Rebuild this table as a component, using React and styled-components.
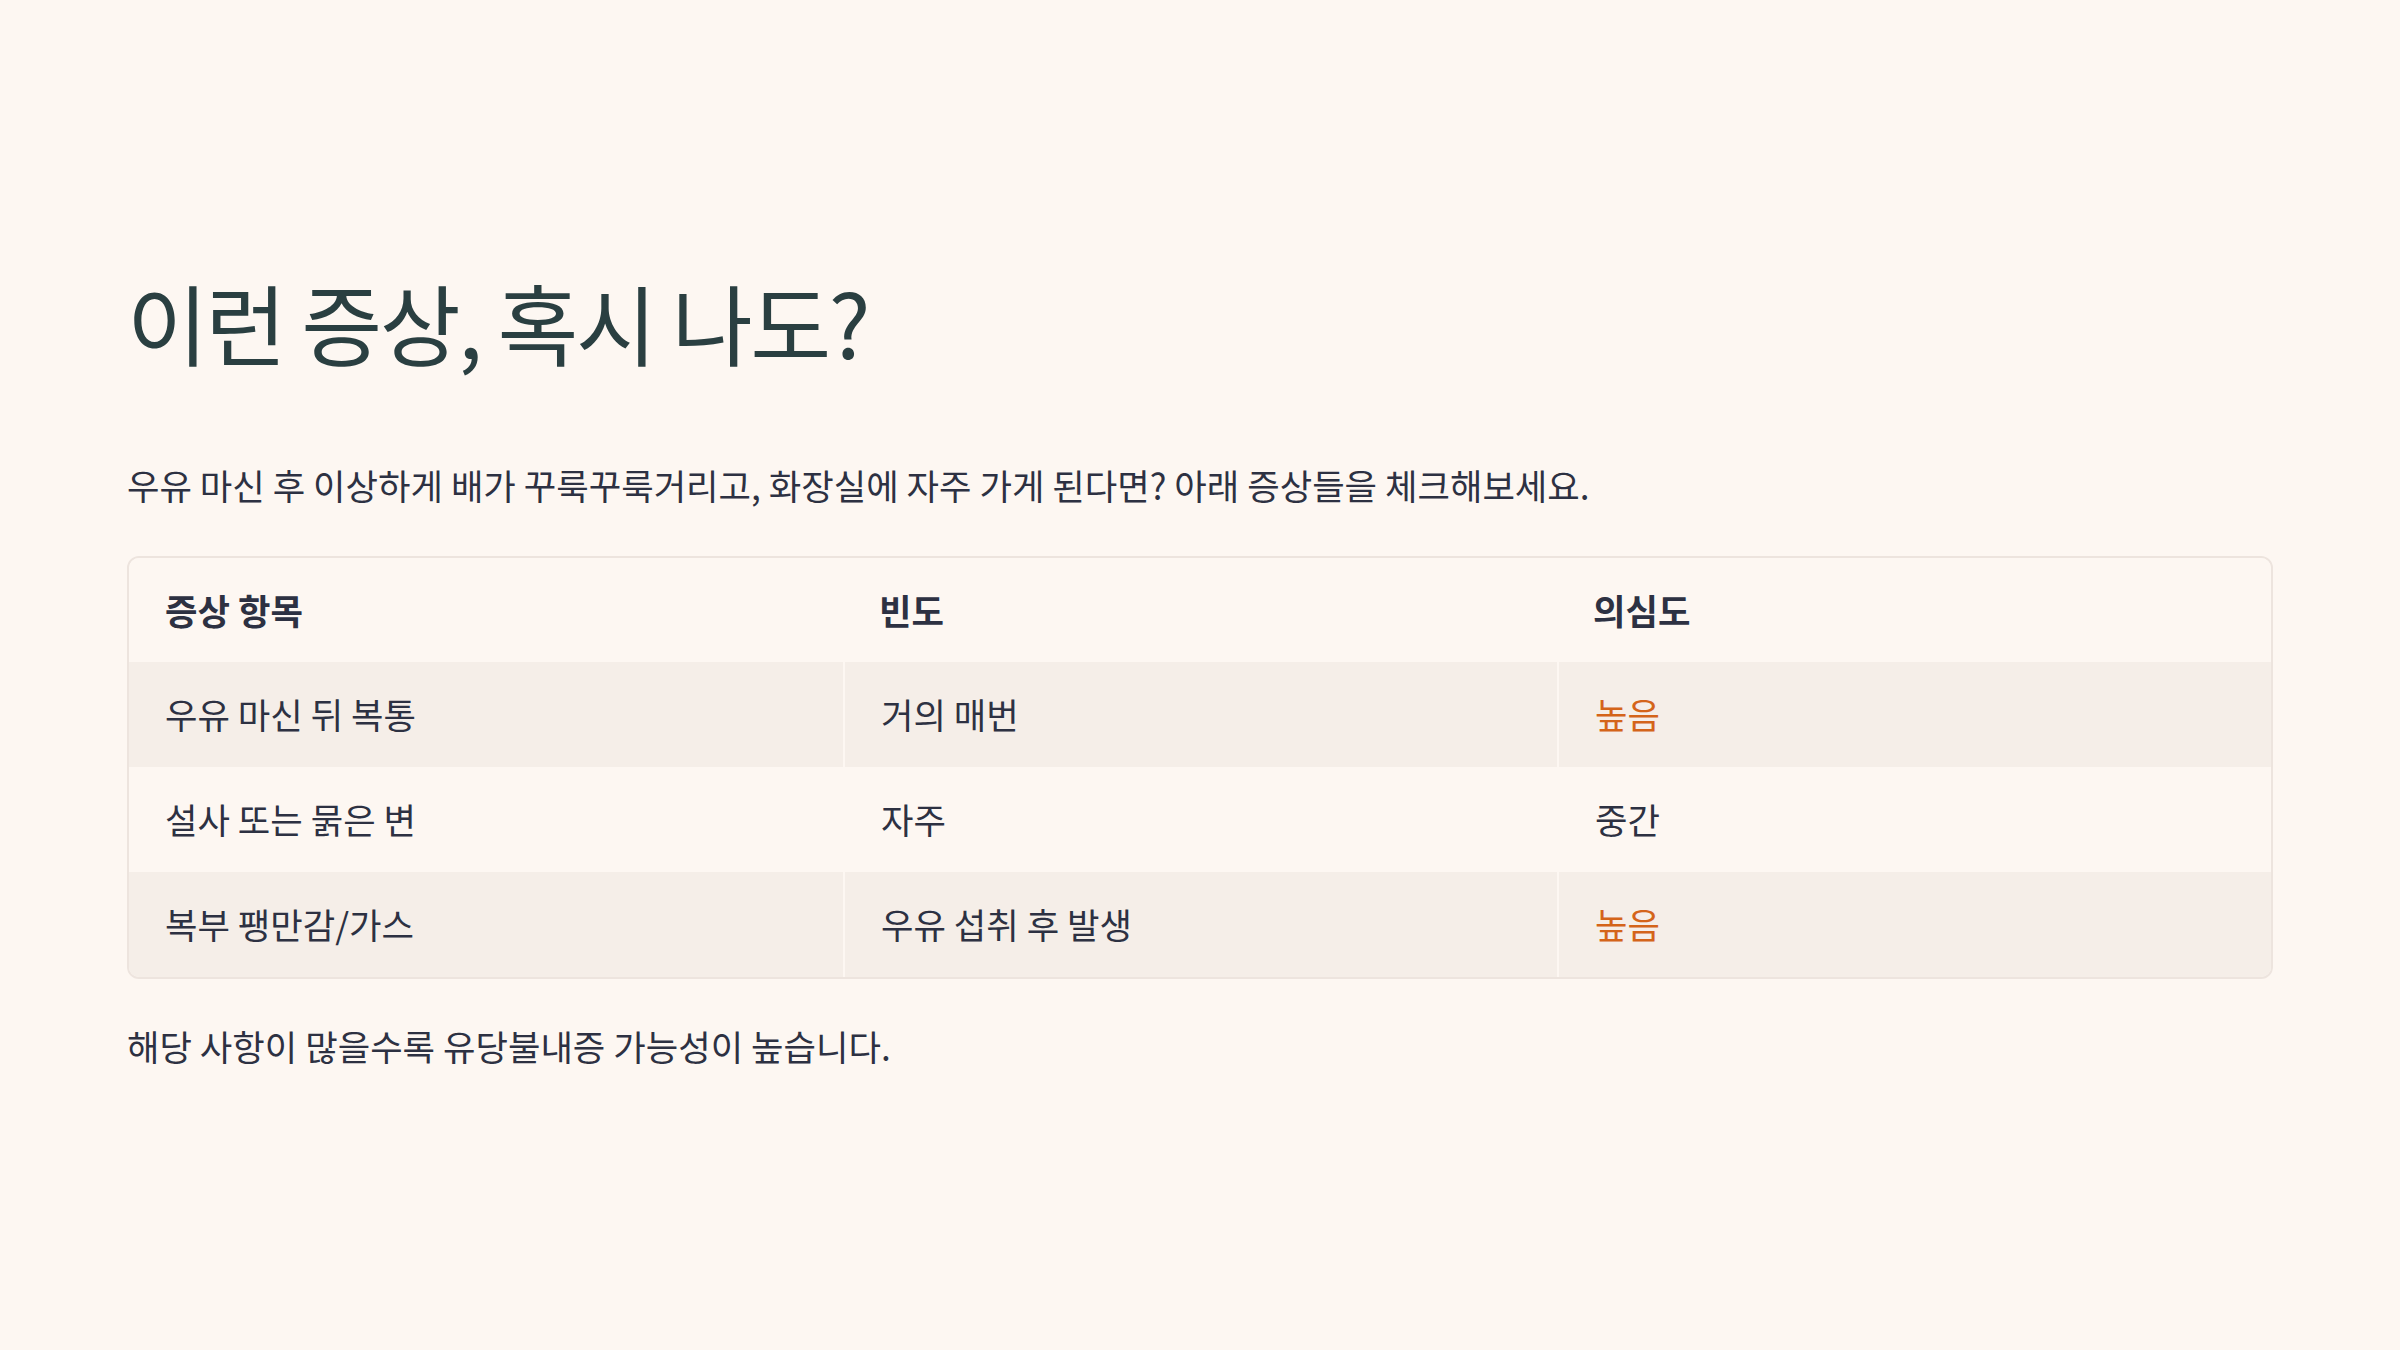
import React from 'react'
import styled, { createGlobalStyle } from 'styled-components'

const GlobalStyle = createGlobalStyle`
  * { box-sizing: border-box; }
  body {
    margin: 0;
    background: #fdf7f2;
    font-family: "Noto Sans CJK KR", "Noto Sans", sans-serif;
    color: #2d3142;
  }
`

const Page = styled.main`
  min-height: 100vh;
  display: flex;
  flex-direction: column;
  padding: 268px 127px 0;
`

const Title = styled.h1`
  margin: 0 0 85px;
  font-size: 88px;
  font-weight: 400;
  line-height: 1.2;
  letter-spacing: -0.028em;
  color: #2a3f41;
`

const Lead = styled.p`
  margin: 0 0 44px;
  font-size: 35.3px;
  line-height: 1.5;
`

const Table = styled.table`
  width: 100%;
  border-collapse: separate;
  border-spacing: 0;
  table-layout: fixed;
  border: 2px solid #ede4de;
  border-radius: 12px;
  overflow: hidden;
`

const Row = styled.tr`
  background: ${p => (p.$shaded ? '#f5eee8' : '#fdf7f2')};
`

const HeadCell = styled.th`
  text-align: left;
  padding: 26px 36px;
  font-size: 35.3px;
  font-weight: 700;
  line-height: 1.5;
  color: #2d3142;
`

const Cell = styled.td`
  padding: 26px 36px;
  font-size: 35.3px;
  line-height: 1.5;
  color: ${p => (p.$alert ? '#d4641a' : '#2d3142')};
  & + & {
    border-left: 2px solid #fdf7f2;
  }
`

const Note = styled.p`
  margin: 41px 0 0;
  font-size: 35.3px;
  line-height: 1.5;
`

const rows = [
  ['우유 마신 뒤 복통', '거의 매번', '높음', true],
  ['설사 또는 묽은 변', '자주', '중간', false],
  ['복부 팽만감/가스', '우유 섭취 후 발생', '높음', true],
]

export default function App() {
  return (
    <>
      <GlobalStyle />
      <Page>
        <Title>이런 증상, 혹시 나도?</Title>
        <Lead>
          우유 마신 후 이상하게 배가 꾸룩꾸룩거리고, 화장실에 자주 가게 된다면? 아래 증상들을 체크해보세요.
        </Lead>
        <Table>
          <thead>
            <Row>
              <HeadCell>증상 항목</HeadCell>
              <HeadCell>빈도</HeadCell>
              <HeadCell>의심도</HeadCell>
            </Row>
          </thead>
          <tbody>
            {rows.map(([symptom, freq, level, alert], i) => (
              <Row key={symptom} $shaded={i % 2 === 0}>
                <Cell>{symptom}</Cell>
                <Cell>{freq}</Cell>
                <Cell $alert={alert}>{level}</Cell>
              </Row>
            ))}
          </tbody>
        </Table>
        <Note>해당 사항이 많을수록 유당불내증 가능성이 높습니다.</Note>
      </Page>
    </>
  )
}
